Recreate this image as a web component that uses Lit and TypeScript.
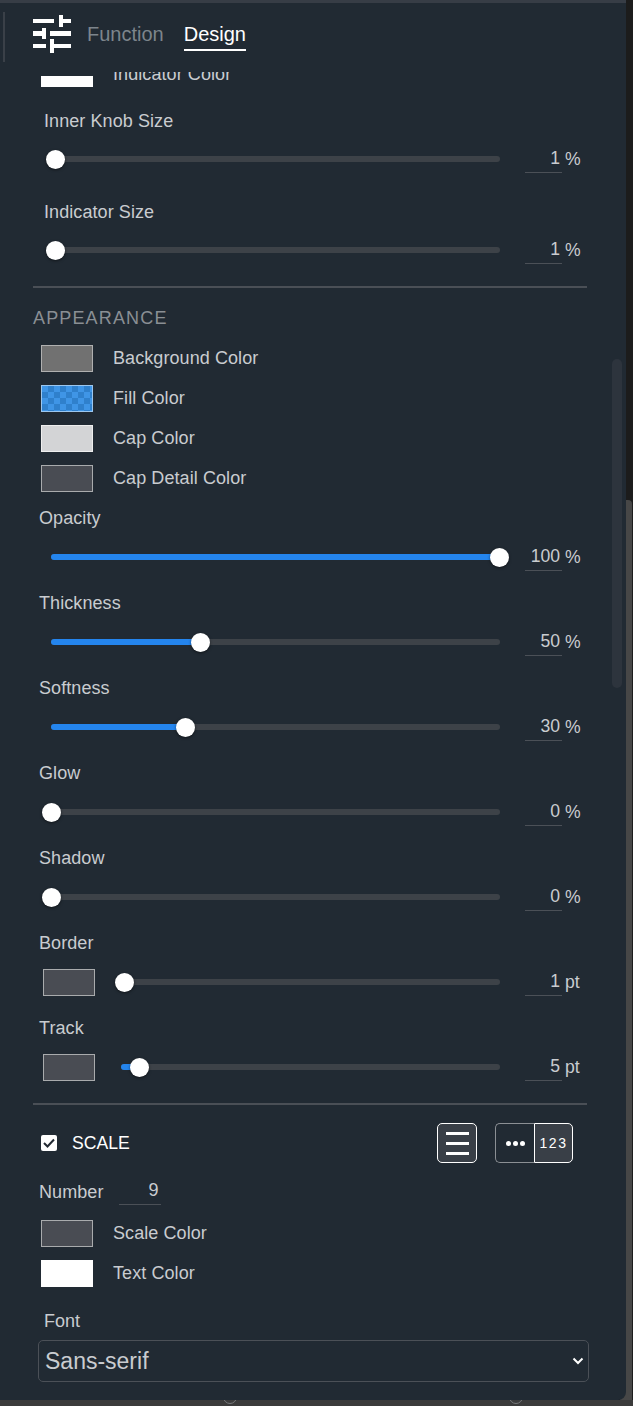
import { LitElement, html, css, nothing } from "lit";
import { customElement } from "lit/decorators.js";

const swatch = (label: string, cls: string) => html`
  <div class="swatch-row">
    <span class="swatch ${cls}"></span><span class="swatch-label">${label}</span>
  </div>`;

const slider = (pct: number, value: string, unit: string) => html`
  <div class="track"><div class="fill" style="width:${pct}%"></div><div class="thumb" style="left:${pct}%"></div></div>
  <div class="value"><span class="num">${value}</span><span class="unit">${unit}</span></div>`;

@customElement("app-root")
export class AppRoot extends LitElement {
  static styles = css`
    :host { display: block; width: 633px; height: 1406px; position: relative; overflow: hidden; background: #1c1c1c; font-family: "Liberation Sans", Arial, sans-serif; color: #c9ccd0; font-size: 18px; }
    .bottom { position: absolute; left: 0; right: 0; top: 1400px; height: 6px; background: #3b3b3b; overflow: hidden; }
    .bottom i { position: absolute; top: -10px; width: 14px; height: 14px; box-sizing: border-box; border: 1px solid #77797b; border-radius: 50%; }
    .side { position: absolute; left: 620px; top: 500px; width: 12px; height: 900px; background: #474747; border-top-right-radius: 4px; }
    .panel { width: 626px; height: 1400px; box-sizing: border-box; background: #212a33; border-top: 3px solid #373d46; border-bottom-right-radius: 8px; display: flex; flex-direction: column; position: relative; overflow: hidden; }
    .header { height: 69px; flex: none; display: flex; align-items: flex-start; padding: 12px 0 0 33px; position: relative; box-sizing: border-box; }
    .header::before { content: ""; position: absolute; left: 3px; top: 9px; width: 2px; height: 50px; background: #3a4048; }
    .logo { width: 38px; height: 38px; flex: none; }
    .tab { font-size: 20px; line-height: 24px; margin: 7px 0 0 16px; padding-bottom: 3px; color: #7d858c; }
    .tab.on { color: #fff; margin-left: 20px; border-bottom: 2px solid #fff; }
    .scroll { flex: 1; overflow: hidden; min-height: 0; }
    .content { margin-top: -18.5px; padding: 0 0 0 33px; width: 554px; }
    .swatch-row { height: 40px; display: flex; align-items: center; padding-left: 8px; gap: 20px; }
    .swatch { width: 52px; height: 27px; box-sizing: border-box; border: 1px solid #a9abad; flex: none; display: block; }
    .swatch.cut { height: 11px; align-self: flex-start; margin-top: 22.5px; }
    .white { background: #fff; border-color: #fff; }
    .gray { background: #717171; border-color: #b0b0b0; }
    .blue { border-color: #9cc7ef; background-color: #3f95e6; background-image: conic-gradient(#2f80cc 25%, transparent 0 50%, #2f80cc 0 75%, transparent 0); background-size: 12px 12px; }
    .light { background: #d3d4d6; border-color: #eee; }
    .dark { background: #494c53; }
    .swatch-label, .lbl { font-size: 18px; letter-spacing: .08px; line-height: 20px; color: #c9ccd0; }
    .sl { height: 85px; box-sizing: border-box; padding-top: 10px; }
    .sl .lbl { padding-left: 6px; }
    .sl.big { height: 91px; padding-top: 17px; }
    .sl.big .lbl { padding-left: 11px; }
    .sl-row { display: flex; align-items: center; height: 28px; margin-top: 15px; padding-left: 18px; }
    .sl.big .sl-row { padding-left: 22px; margin-top: 14.5px; }
    .sl.sw .sl-row { padding-left: 10px; }
    .sl-row .swatch { margin-right: 26px; }
    .track { position: relative; flex: 1; height: 6px; border-radius: 3px; background: #3d4248; }
    .fill { position: absolute; left: 0; top: 0; bottom: 0; border-radius: 3px; background: #2485ee; }
    .thumb { position: absolute; top: 50%; width: 19px; height: 19px; margin: -9.5px 0 0 -9.5px; border-radius: 50%; background: #fff; box-shadow: 0 1px 3px rgba(0,0,0,.5); }
    .value { width: 87px; flex: none; box-sizing: border-box; padding-left: 25px; display: flex; align-items: center; }
    .num { width: 37px; flex: none; box-sizing: border-box; text-align: right; padding-right: 2px; height: 28px; line-height: 27px; border-bottom: 1px solid #4b5057; font-size: 17.6px; color: #c9ccd0; }
    .unit { font-size: 17.6px; margin-left: 3px; line-height: 28px; white-space: nowrap; }
    .rule { height: 2px; background: #4a4f56; }
    .rule.a { margin-top: 10.5px; }
    .rule.b { margin-top: 10px; }
    .head { font-size: 18px; letter-spacing: 1.15px; line-height: 20px; color: #8a8f94; margin: 20px 0 10px; }
    .scale { display: flex; align-items: center; height: 40px; margin-top: 18px; padding-left: 8px; color: #fff; }
    .check { width: 16px; height: 16px; border-radius: 2px; background: #fff; flex: none; display: flex; align-items: center; justify-content: center; }
    .scale-t { margin-left: 15px; font-size: 17.6px; flex: 1; }
    .btn { width: 40px; height: 40px; box-sizing: border-box; border: 1px solid #fff; border-radius: 5px; background: #393f47; display: flex; flex-direction: column; justify-content: center; align-items: center; gap: 7px; }
    .btn i { display: block; width: 23px; height: 3px; background: #fff; }
    .seg { width: 78px; height: 40px; display: flex; margin: 0 14px 0 18px; }
    .seg-a { width: 39px; box-sizing: border-box; border: 1px solid #8b8f94; border-right: none; border-radius: 5px 0 0 5px; display: flex; align-items: center; justify-content: center; gap: 2px; }
    .seg-a b { width: 5px; height: 5px; border-radius: 50%; background: #fff; }
    .seg-b { flex: 1; box-sizing: border-box; background: #393f47; border: 1px solid #fff; border-radius: 0 5px 5px 0; color: #fff; font-size: 14px; letter-spacing: 1.5px; display: flex; align-items: center; justify-content: center; }
    .number { display: flex; align-items: center; height: 36px; margin: 11px 0 3px; padding-left: 6px; }
    .n-in { width: 42px; margin-left: 15px; box-sizing: border-box; text-align: right; padding-right: 2px; height: 26px; line-height: 22px; border-bottom: 1px solid #4b5057; font-size: 18px; }
    .font-l { font-size: 18px; line-height: 20px; padding-left: 11px; margin-top: 18px; }
    .sel { width: 551px; height: 42px; box-sizing: border-box; margin: 9px 0 0 5px; border: 1px solid #4b5057; border-radius: 5px; display: flex; align-items: center; justify-content: space-between; padding: 0 4px 0 6px; font-size: 23px; color: #c9ccd0; }
    .scrollbar { position: absolute; left: 612px; top: 356px; width: 10px; height: 329px; border-radius: 5px; background: #2d343d; }
  `;

  private row(label: string, pct: number, value: string, unit = "%", big = false, sw = false) {
    return html`<div class="sl ${big ? "big" : ""} ${sw ? "sw" : ""}">
      <div class="lbl">${label}</div>
      <div class="sl-row">${sw ? html`<span class="swatch dark"></span>` : nothing}${slider(pct, value, unit)}</div>
    </div>`;
  }

  render() {
    return html`
      <div class="side"></div>
      <div class="panel">
        <div class="header">
          <svg class="logo" viewBox="0 0 38 38" fill="#fff">
            <rect x="0" y="4" width="21" height="4"/><rect x="26" y="0" width="4" height="12"/><rect x="26" y="4" width="12" height="4"/>
            <rect x="0" y="16" width="9" height="5"/><rect x="9" y="13" width="4" height="11"/><rect x="17" y="16" width="21" height="5"/>
            <rect x="0" y="29" width="13" height="4"/><rect x="17" y="29" width="21" height="4"/><rect x="17" y="24" width="4" height="14"/>
          </svg>
          <span class="tab">Function</span><span class="tab on">Design</span>
        </div>
        <div class="scroll"><div class="content">
          <div class="swatch-row"><span class="swatch white cut"></span><span class="swatch-label">Indicator Color</span></div>
          ${this.row("Inner Knob Size", 0, "1", "%", true)}
          ${this.row("Indicator Size", 0, "1", "%", true)}
          <div class="rule a"></div>
          <div class="head">APPEARANCE</div>
          ${swatch("Background Color", "gray")}
          ${swatch("Fill Color", "blue")}
          ${swatch("Cap Color", "light")}
          ${swatch("Cap Detail Color", "dark")}
          ${this.row("Opacity", 99.9, "100")}
          ${this.row("Thickness", 33.2, "50")}
          ${this.row("Softness", 29.9, "30")}
          ${this.row("Glow", 0, "0")}
          ${this.row("Shadow", 0, "0")}
          ${this.row("Border", 1, "1", "pt", false, true)}
          ${this.row("Track", 5, "5", "pt", false, true)}
          <div class="rule b"></div>
          <div class="scale">
            <span class="check"><svg width="12" height="10" viewBox="0 0 12 10" fill="none" stroke="#222932" stroke-width="2"><path d="M1 5l3.5 3.5L11 1.5"/></svg></span>
            <span class="scale-t">SCALE</span>
            <div class="btn"><i></i><i></i><i></i></div>
            <div class="seg"><div class="seg-a"><b></b><b></b><b></b></div><div class="seg-b">123</div></div>
          </div>
          <div class="number"><span class="lbl">Number</span><span class="n-in">9</span></div>
          ${swatch("Scale Color", "dark")}
          ${swatch("Text Color", "white")}
          <div class="font-l">Font</div>
          <div class="sel"><span>Sans-serif</span><svg width="12" height="8" viewBox="0 0 12 8" fill="none" stroke="#fff" stroke-width="2"><path d="M1.5 1.5L6 6l4.5-4.5"/></svg></div>
        </div></div>
        <div class="scrollbar"></div>
      </div>
      <div class="bottom"><i style="left:223px"></i><i style="left:509px"></i></div>
    `;
  }
}
